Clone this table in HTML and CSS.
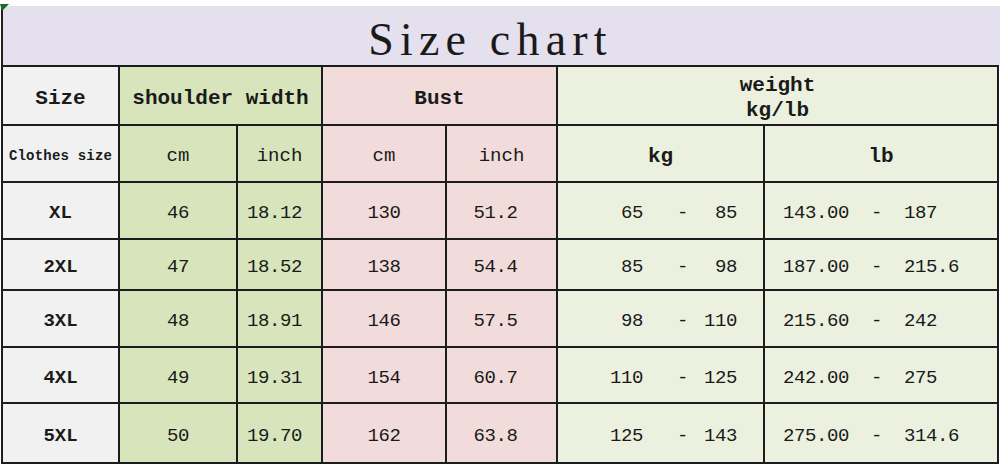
FILE: index.html
```html
<!DOCTYPE html>
<html>
<head>
<meta charset="utf-8">
<link rel="stylesheet" href="styles.css">
</head>
<body>
<div class="sheet">
  <svg class="corner" width="9" height="8" viewBox="0 0 9 8"><polygon points="0,0 9,0 2,7" fill="#1d6b2a"/></svg>
  <div class="title">Size chart</div>
  <div class="grid">
    <div class="c gray hb">Size</div>
    <div class="c green hb span2">shoulder width</div>
    <div class="c pink hb span2">Bust</div>
    <div class="c lgreen hb span2 two">weight<br>kg/lb</div>

    <div class="c gray small">Clothes size</div>
    <div class="c green unit">cm</div>
    <div class="c green unit">inch</div>
    <div class="c pink unit">cm</div>
    <div class="c pink unit">inch</div>
    <div class="c lgreen hb">kg</div>
    <div class="c lgreen hb">lb</div>

    <div class="c gray lbl">XL</div>
    <div class="c green num">46</div>
    <div class="c green num in1">18.12</div>
    <div class="c pink num">130</div>
    <div class="c pink num in2">51.2</div>
    <div class="c lgreen num kg"><span>65</span><span class="d">-</span><span>85</span></div>
    <div class="c lgreen num lb">143.00  -  187</div>

    <div class="c gray lbl">2XL</div>
    <div class="c green num">47</div>
    <div class="c green num in1">18.52</div>
    <div class="c pink num">138</div>
    <div class="c pink num in2">54.4</div>
    <div class="c lgreen num kg"><span>85</span><span class="d">-</span><span>98</span></div>
    <div class="c lgreen num lb">187.00  -  215.6</div>

    <div class="c gray lbl">3XL</div>
    <div class="c green num">48</div>
    <div class="c green num in1">18.91</div>
    <div class="c pink num">146</div>
    <div class="c pink num in2">57.5</div>
    <div class="c lgreen num kg"><span>98</span><span class="d">-</span><span>110</span></div>
    <div class="c lgreen num lb">215.60  -  242</div>

    <div class="c gray lbl">4XL</div>
    <div class="c green num">49</div>
    <div class="c green num in1">19.31</div>
    <div class="c pink num">154</div>
    <div class="c pink num in2">60.7</div>
    <div class="c lgreen num kg"><span>110</span><span class="d">-</span><span>125</span></div>
    <div class="c lgreen num lb">242.00  -  275</div>

    <div class="c gray lbl">5XL</div>
    <div class="c green num">50</div>
    <div class="c green num in1">19.70</div>
    <div class="c pink num">162</div>
    <div class="c pink num in2">63.8</div>
    <div class="c lgreen num kg"><span>125</span><span class="d">-</span><span>143</span></div>
    <div class="c lgreen num lb">275.00  -  314.6</div>
  </div>
</div>
</body>
</html>
```
FILE: styles.css
```css
html, body {
  margin: 0;
  padding: 0;
  background: #ffffff;
}
.sheet {
  position: relative;
  width: 1000px;
  height: 472px;
  padding-top: 6px;
  box-sizing: border-box;
  color: #1a1a1a;
}
.corner {
  position: absolute;
  left: 0;
  top: 4px;
}
.title {
  height: 59px;
  margin-left: 1px;
  border-left: 2px solid #1f1f1f;
  background: #e4e0ee;
  box-sizing: border-box;
  display: flex;
  justify-content: center;
  padding-top: 9px;
  padding-right: 22px;
  font-family: "Liberation Serif", serif;
  font-size: 46px;
  line-height: 50px;
  letter-spacing: 6.2px;
}
.grid {
  margin-left: 1px;
  width: 998px;
  box-sizing: border-box;
  background: #1c1c1c;
  padding: 2px;
  display: grid;
  gap: 2px;
  grid-template-columns: 115px 116px 83px 122px 109px 205px 232px;
  grid-template-rows: 57px 55px 55px 49px 55px 54px 58px;
  font-family: "Liberation Mono", monospace;
}
.c {
  display: flex;
  align-items: center;
  justify-content: center;
  white-space: pre;
  padding-top: 5px;
  box-sizing: border-box;
}
.span2 { grid-column: span 2; }
.gray { background: #f1f1f1; }
.green { background: #d8e4bc; }
.pink { background: #f2dcdb; }
.lgreen { background: #ebf1de; }
.hb {
  font-weight: bold;
  font-size: 21px;
}
.two {
  flex-direction: column;
  line-height: 25px;
  text-align: center;
}
.small {
  font-weight: bold;
  font-size: 14px;
  letter-spacing: 0.2px;
}
.unit {
  font-size: 19px;
}
.lbl {
  font-weight: bold;
  font-size: 19px;
}
.num {
  font-size: 19px;
  letter-spacing: -0.4px;
}
.in1 { padding-right: 10px; }
.in2 { padding-right: 12px; }
.kg {
  display: grid;
  grid-template-columns: 85px 48px 46px;
  justify-content: start;
  align-items: center;
}
.kg span { text-align: right; }
.kg .d { padding-right: 3px; }
.lb {
  justify-content: flex-start;
  padding-left: 18px;
}
```
